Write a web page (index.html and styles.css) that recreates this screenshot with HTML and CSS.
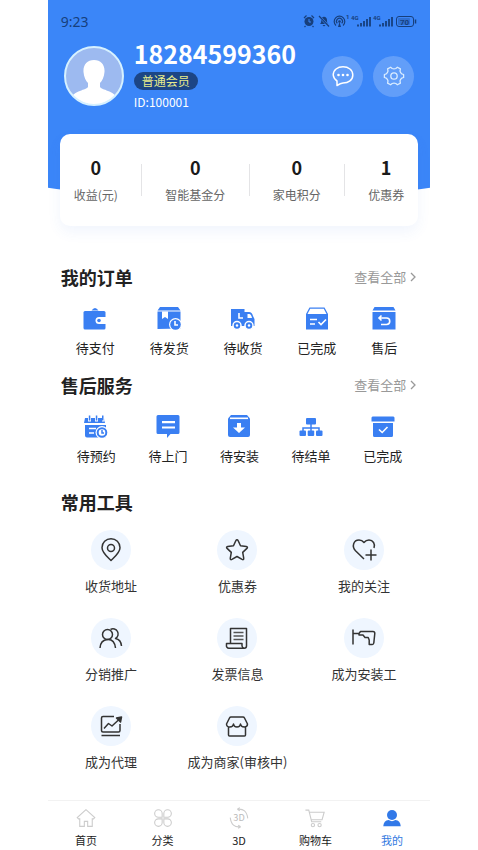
FILE: index.html
```html
<!DOCTYPE html>
<html lang="zh-CN">
<head>
<meta charset="utf-8">
<meta name="viewport" content="width=device-width, initial-scale=1">
<title>我的</title>
<link rel="stylesheet" href="styles.css">
</head>
<body>
<div class="app">
  <header class="hero">
    <div class="status">
      <span class="time">9:23</span>
      <svg class="status-icons" width="114" height="14" viewBox="0 0 114 14" aria-hidden="true">
        <circle cx="6" cy="7.500" r="4.500" fill="currentColor"/>
        <path d="M1 4l2.500-2.500M11 4L8.500 1.500M2.500 12l-1 1M9.500 12l1 1" stroke="currentColor" stroke-width="1.200"/>
        <path d="M6 5v3h2" stroke="#3b86f8" fill="none"/>
        <path d="M17 10c1-1 1.200-2 1.200-4 0-2 1-3 2.800-3.300 1.800.3 3 1.300 3 3.300 0 2 .2 3 1.200 4zM19.500 11h3l-1.500 1.500z" fill="currentColor"/>
        <path d="M16.500 2.500l9.500 10" stroke="#3b86f8" stroke-width="2.400"/>
        <path d="M16 2l10 10.500" stroke="currentColor" stroke-width="1.200"/>
        <path d="M33 11.500a5.300 5.300 0 1 1 7 0M34.300 9.300a3 3 0 1 1 4.400 0" stroke="currentColor" stroke-width="1.200" fill="none"/>
        <circle cx="36.500" cy="7.500" r="1.300" fill="currentColor"/>
        <path d="M36.500 8l-1.500 5h3z" fill="currentColor"/>
        <text x="43" y="5" font-size="6">1</text>
        <text x="48" y="6" font-size="6">4G</text>
        <path d="M55 12.500v-2M58 12.500V9M61 12.500V7M64 12.500V5M67 12.500V3" stroke="currentColor" stroke-width="1.800"/>
        <text x="70" y="6" font-size="6">4G</text>
        <path d="M77 12.500v-2M80 12.500V9M83 12.500V7M86 12.500V5M89 12.500V3" stroke="currentColor" stroke-width="1.800"/>
        <rect x="93.500" y="2.500" width="17" height="10" rx="2.500" stroke="currentColor" fill="none"/>
        <rect x="95" y="4" width="12" height="7" rx="1" fill="currentColor" opacity=".3"/>
        <path d="M112.500 5.500v4" stroke="currentColor" stroke-width="1.500"/>
        <text x="97" y="10.500" font-size="8">70</text>
      </svg>
    </div>
    <div class="profile">
      <svg class="avatar" viewBox="0 0 60 60" role="img" aria-label="头像">
        <defs><clipPath id="face"><circle cx="30" cy="30" r="28.500"/></clipPath></defs>
        <circle cx="30" cy="30" r="29" fill="#9dbaf0"/>
        <g clip-path="url(#face)" fill="#fff">
          <path d="M30 14c7 0 11 5 10.500 12-.3 5-2.500 9-4.500 11v4c1.500 3 14 3.500 18 12v9H6v-9c4-8.500 16.500-9 18-12v-4c-2-2-4.200-6-4.500-11C19 19 23 14 30 14z"/>
        </g>
        <circle cx="30" cy="30" r="29" fill="none" stroke="#d6f1ff" stroke-width="2"/>
      </svg>
      <div class="who">
        <h1 class="phone">18284599360</h1>
        <span class="badge">普通会员</span>
        <span class="uid">ID:100001</span>
      </div>
      <div class="actions">
        <button class="round" type="button" aria-label="消息">
          <svg width="24" height="24" viewBox="0 0 24 24" fill="none" stroke="#fff" stroke-width="1.500" stroke-linejoin="round"><path d="M6 21.500v-4.500A8.600 8.600 0 0 1 2.200 11C2.200 6 6.500 2.800 12 2.800S21.800 6 21.800 11 17.500 19 12 19q-2.500.2-6 2.500z"/><g fill="#fff" stroke="none"><circle cx="7.500" cy="11" r="1.300"/><circle cx="12" cy="11" r="1.300"/><circle cx="16.500" cy="11" r="1.300"/></g></svg>
        </button>
        <button class="round" type="button" aria-label="设置">
          <svg width="24" height="24" viewBox="0 0 24 24" fill="none" stroke="#d9ecff" stroke-width="1.300" stroke-linejoin="round"><path d="M8.600 3.200l1.600 1.300q1.800.7 3.600 0l1.600-1.300 3 1.700-.4 2.200q.4 1.700 1.700 2.700l1.900.7v3l-1.900.7q-1.300 1-1.700 2.700l.4 2.200-3 1.700-1.600-1.300q-1.800-.7-3.600 0l-1.600 1.300-3-1.700.4-2.200q-.4-1.700-1.700-2.700l-1.900-.7v-3l1.900-.7q1.300-1 1.700-2.700l-.4-2.200z"/><circle cx="12" cy="12" r="3.200"/></svg>
        </button>
      </div>
    </div>
  </header>

  <main>
    <section class="stats" aria-label="资产">
      <a class="stat" href="#"><strong>0</strong><span>收益(元)</span></a>
      <i class="rule"></i>
      <a class="stat" href="#"><strong>0</strong><span>智能基金分</span></a>
      <i class="rule"></i>
      <a class="stat" href="#"><strong>0</strong><span>家电积分</span></a>
      <i class="rule"></i>
      <a class="stat" href="#"><strong>1</strong><span>优惠券</span></a>
    </section>

    <section class="block">
      <div class="head">
        <h2>我的订单</h2>
        <a class="more" href="#">查看全部<svg width="6" height="10" viewBox="0 0 6 10"><path d="M1 1l4 4-4 4" fill="none" stroke="currentColor" stroke-width="1.300"/></svg></a>
      </div>
      <div class="row">
        <a class="item" href="#"><svg viewBox="0 0 24 24"><path d="M8.500 3.500Q12-1.500 15.500 3.500z"/><rect x=".5" y="4" width="22" height="18.500" rx="1.500"/><path d="M24 10h-8a3.500 3.500 0 0 0 0 7h8z" fill="#fff"/><circle cx="16" cy="13.500" r="1.800"/></svg>待支付</a>
        <a class="item" href="#"><svg viewBox="0 0 24 24"><path d="M3 0h18l2.500 3.500H.5zM.5 4.500h23v17h-1L.5 22z"/><path d="M5 4.500h6V12l-3-2-3 2z" fill="#fff"/><circle cx="18.500" cy="17.500" r="6.500" fill="#fff"/><circle cx="18.500" cy="17.500" r="5.300"/><path d="M18 14v4h3" class="cut"/></svg>待发货</a>
        <a class="item" href="#"><svg viewBox="0 0 24 24"><path d="M0 2h13.500v17H0zM13 5h5q3 0 4 4l1.500 3v7H13z"/><path d="M16.500 7h1.700q2 0 2.800 4h-4.500z" fill="#fff"/><path d="M8 6v5h4" class="cut"/><g stroke="#fff" stroke-width="1.500"><circle cx="6" cy="18.500" r="4"/><circle cx="18" cy="18.500" r="4"/></g><g fill="#fff"><circle cx="6" cy="18.500" r="1.200"/><circle cx="18" cy="18.500" r="1.200"/></g></svg>待收货</a>
        <a class="item" href="#"><svg viewBox="0 0 24 24"><path d="M4.500.5h15L23 7v15.500H1V7z"/><path d="M5.200 1.800h13.600l2.700 5.200h-19z" fill="#fff"/><path d="M5 12.500h7M5 17h5M13.500 15l2.500 2.500 5-5" class="cut"/></svg>已完成</a>
        <a class="item" href="#"><svg viewBox="0 0 24 24"><path d="M2.500 0h19l2 3.500H.5zM.5 5h23v17.500H.5z"/><path d="M7 11h7.500a3 3 0 0 1 0 6.500H9M9.500 8.500L7 11l2.500 2.500" class="cut"/></svg>售后</a>
      </div>
    </section>

    <section class="block service">
      <div class="head">
        <h2>售后服务</h2>
        <a class="more" href="#">查看全部<svg width="6" height="10" viewBox="0 0 6 10"><path d="M1 1l4 4-4 4" fill="none" stroke="currentColor" stroke-width="1.300"/></svg></a>
      </div>
      <div class="row">
        <a class="item" href="#"><svg viewBox="0 0 24 24"><path d="M1 3h3v3.500h3V3h4v3.500h3V3h4v3.500h3L20 3l1 5H0zM4.800.5h1.500v5H4.800zM11.800.5h1.500v5h-1.500zM18 .5h1.500v5H18zM1 10h21v12.500H3a2 2 0 0 1-2-2z"/><path d="M5 13.500h7M5 18h5" class="cut"/><circle cx="18" cy="17.500" r="6.500" fill="#fff"/><circle cx="18" cy="17.500" r="4.300" fill="none" stroke="currentColor" stroke-width="2"/><path d="M18 15v3h2" fill="none" stroke="currentColor" stroke-width="1.500"/></svg>待预约</a>
        <a class="item" href="#"><svg viewBox="0 0 24 24"><path d="M2 0h20a1.500 1.500 0 0 1 1.500 1.500v16A1.500 1.500 0 0 1 22 19h-7.500L11 23v-4H2a1.500 1.500 0 0 1-1.500-1.500v-16A1.500 1.500 0 0 1 2 0z"/><path d="M6 7.200h13M6 12.500h13" class="cut wide"/></svg>待上门</a>
        <a class="item" href="#"><svg viewBox="0 0 24 24"><path d="M4 0h16l3 3.500V20a2 2 0 0 1-2 2H3a2 2 0 0 1-2-2V3.500z"/><path d="M3 3.300h18" class="cut"/><path d="M10 8h4v4.500h4L12 18l-6-5.500h4z" fill="#fff"/></svg>待安装</a>
        <a class="item" href="#"><svg viewBox="0 0 24 24"><rect x="7" y="3" width="10" height="6.500" rx="1"/><path d="M12 9v8M4 17v-4h16v4" fill="none" stroke="currentColor" stroke-width="1.500"/><rect x=".5" y="15.500" width="6.500" height="5.500" rx="1"/><rect x="8.700" y="15.500" width="6.500" height="5.500" rx="1"/><rect x="17" y="15.500" width="6.500" height="5.500" rx="1"/></svg>待结单</a>
        <a class="item" href="#"><svg viewBox="0 0 24 24"><path d="M1.500 1.500h21l1 1v4H.5v-4zM2 8h20v12.500a1.500 1.500 0 0 1-1.500 1.500h-17A1.500 1.500 0 0 1 2 20.500z"/><path d="M8 14.500l3.200 3 5.300-5.500" class="cut"/></svg>已完成</a>
      </div>
    </section>

    <section class="block tools">
      <div class="head"><h2>常用工具</h2></div>
      <div class="grid">
        <a class="tool" href="#"><span class="disc"><svg viewBox="0 0 24 24"><path d="M12 22.500C8 18.500 3 14.500 3 9.700a9 9 0 0 1 18 0c0 4.800-5 8.800-9 12.800z"/><circle cx="12" cy="10" r="3.500"/></svg></span>收货地址</a>
        <a class="tool" href="#"><span class="disc"><svg viewBox="0 0 24 24"><path d="M12 1.800q.7 0 1.200 1l2.300 5 5.800.7q1.900.4.600 1.900l-4.200 4 1 5.800q.2 2-1.600 1.200L12 18.500l-5.100 2.900q-1.800.8-1.600-1.200l1-5.800-4.200-4q-1.300-1.500.6-1.900l5.800-.7 2.300-5q.5-1 1.200-1z"/></svg></span>优惠券</a>
        <a class="tool" href="#"><span class="disc"><svg viewBox="0 0 24 24"><path d="M12 21L3.500 12.800C-.5 8.500 1.500 2 7 2q3 0 5 2.500Q14 2 17 2c4 0 6.500 4 5 8M19 11.500v11M13.500 17h11"/></svg></span>我的关注</a>
        <a class="tool" href="#"><span class="disc"><svg viewBox="0 0 24 24"><circle cx="8.500" cy="8.500" r="5"/><path d="M1 22q.5-8 7.500-8.500T16.500 22M11.500 3.500a5 5 0 1 1 5 9q5.500 1 6 7.500"/></svg></span>分销推广</a>
        <a class="tool" href="#"><span class="disc"><svg viewBox="0 0 24 24"><path d="M5.500 17V2.500h16V20a2.200 2.200 0 0 1-2.200 2.200H4A2.500 2.500 0 0 1 1.500 19v-1.500H17V20q.3 2 2.300 2.200"/><path d="M8.500 6.500h10M8.500 10h10M8.500 13.500h10" stroke="#555"/></svg></span>发票信息</a>
        <a class="tool" href="#"><span class="disc"><svg viewBox="0 0 24 24"><path d="M1 3.500v15M1 7.500h6l1.500-2H21q1.800 0 1.800 2L21.800 17q-.2 1.500-1.500 1.500h-3.100V14l-1-2.500H13L11 9H7V7"/></svg></span>成为安装工</a>
        <a class="tool" href="#"><span class="disc"><svg viewBox="0 0 24 24"><path d="M15 2.500H4A1.500 1.500 0 0 0 2.500 4v12.500A1.500 1.500 0 0 0 4 18h15.500a1.500 1.500 0 0 0 1.500-1.500V10M2.500 21.500H21M5 14.500l4.500-5 3.500 2.500 7-6.500"/><path d="M17.500 4l5-1-1 5z" fill="currentColor"/></svg></span>成为代理</a>
        <a class="tool" href="#"><span class="disc"><svg viewBox="0 0 24 24"><path d="M6 3h12q1 0 1.500 1l3 6q0 3-3.300 3t-3.700-3q-.3 3-3.500 3t-3.500-3q-.4 3-3.700 3t-3.300-3l3-6Q5 3 6 3zM3.500 13v8q0 1 1 1h15q1 0 1-1v-8"/></svg></span>成为商家(审核中)</a>
      </div>
    </section>
  </main>

  <nav class="tabs">
    <a class="tab" href="#"><svg viewBox="0 0 24 24"><path d="M12 2L1.500 11.500 3 13h1.500v9H10v-6h4v6h5.500v-9H21l1.500-1.500z"/></svg>首页</a>
    <a class="tab" href="#"><svg viewBox="0 0 24 24"><path d="M11 11H6.500A4.500 4.500 0 1 1 11 6.500zM13 11V6.500a4.500 4.500 0 1 1 4.500 4.500zM11 13v4.500A4.500 4.500 0 1 1 6.500 13zM13 13h4.500a4.500 4.500 0 1 1-4.500 4.500z"/></svg>分类</a>
    <a class="tab" href="#"><svg viewBox="0 0 24 24"><path d="M10 1.500q11-1.500 12.500 11M10 1.500l3-2M10 1.500l3 2M14 22.500Q3 24 1.500 11.500M14 22.500l-3-2M14 22.500l-3 2"/><text x="12" y="16" text-anchor="middle">3D</text></svg>3D</a>
    <a class="tab" href="#"><svg viewBox="0 0 24 24"><path d="M.5 2.500h4L8 16.500h11.500M5 5h18l-2.500 9H7.500"/><circle cx="9.500" cy="20.500" r="2"/><circle cx="17.500" cy="20.500" r="2"/></svg>购物车</a>
    <a class="tab active" href="#" aria-current="page"><svg viewBox="0 0 24 24"><circle cx="12" cy="8.500" r="6"/><path d="M1.500 22q.5-7 6.500-7.500 4 2.500 8 0 6 .5 6.500 7.500z"/></svg>我的</a>
  </nav>
</div>
</body>
</html>
```
FILE: styles.css
```css
* {
  box-sizing: border-box;
}

body {
  margin: 0;
  background: #fff;
  color: #222;
  font-family: "Noto Sans CJK SC", "Noto Sans", sans-serif;
}

a {
  color: inherit;
  text-decoration: none;
}

h1,
h2 {
  margin: 0;
}

svg {
  display: block;
  overflow: visible;
}

.app {
  position: relative;
  display: flex;
  flex-direction: column;
  width: 80%;
  min-height: 100vh;
  margin: 0 auto;
}

.app::before {
  content: "";
  position: absolute;
  inset: 0 0 auto;
  height: 204px;
  background: #3b86f8;
  clip-path: ellipse(140% 201px at 50% 0);
}

.hero {
  position: relative;
  padding: 12px 16px 24px;
  color: #fff;
}

/* status bar */
.status {
  display: flex;
  align-items: center;
  justify-content: space-between;
  height: 18px;
  margin: 0 -3px;
  color: #173f7c;
}

.time {
  font: 14px "Noto Sans", sans-serif;
}

.status-icons text {
  fill: currentColor;
  font-family: Roboto, sans-serif;
  font-weight: 700;
}

/* profile */
.profile {
  display: flex;
  align-items: center;
  gap: 10px;
  margin-top: 12px;
}

.avatar {
  width: 60px;
  height: 60px;
}

.who {
  display: flex;
  flex: 1;
  flex-direction: column;
  align-items: flex-start;
}

.phone {
  font-size: 25px;
  line-height: 22px;
}

.badge {
  margin-top: 8px;
  padding: 0 8px;
  border-radius: 9px;
  background: #1c4585;
  color: #e8ec8c;
  font-size: 12px;
  line-height: 18px;
}

.uid {
  margin-top: 4px;
  font-size: 12px;
  line-height: 16px;
}

.actions {
  display: flex;
  gap: 10px;
}

.round {
  display: grid;
  place-items: center;
  width: 41px;
  height: 41px;
  padding: 0;
  border: 0;
  border-radius: 50%;
  background: rgba(255, 255, 255, .2);
}

/* stats card */
.stats {
  position: relative;
  display: flex;
  align-items: center;
  justify-content: space-between;
  height: 92px;
  margin: 0 12px;
  padding: 0 14px;
  border-radius: 10px;
  background: #fff;
  box-shadow: 0 6px 14px rgba(60, 110, 230, .07);
}

.stat {
  display: flex;
  flex-direction: column;
  align-items: center;
  gap: 6px;
  color: #666;
  font-size: 12px;
  line-height: 20px;
}

.stat strong {
  color: #1a1a1a;
  font-size: 18px;
  line-height: 24px;
}

.rule {
  width: 1px;
  height: 32px;
  background: #e4e4e6;
}

/* sections */
.block {
  margin-top: 14px;
}

.stats + .block {
  margin-top: 38px;
}

.tools {
  margin-top: 23px;
}

.head {
  display: flex;
  align-items: center;
  justify-content: space-between;
  padding: 0 14px 0 13px;
}

h2 {
  font-size: 18px;
  line-height: 26px;
}

.more {
  display: flex;
  align-items: center;
  gap: 4px;
  color: #999;
  font-size: 13px;
  line-height: 24px;
}

.row {
  display: flex;
  justify-content: space-between;
  margin-top: 17px;
  padding: 0 33px 0 28px;
}

.service .row {
  padding: 0 28px 0 29px;
}

.item {
  display: flex;
  flex-direction: column;
  align-items: center;
  gap: 7px;
  font-size: 13px;
  line-height: 20px;
}

.item svg {
  width: 24px;
  height: 24px;
  fill: currentColor;
  color: #3a7ff2;
}

.item .cut {
  fill: none;
  stroke: #fff;
  stroke-width: 1.6;
}

.item .wide {
  stroke-width: 2.2;
}

.grid {
  display: grid;
  grid-template-columns: repeat(3, 1fr);
  row-gap: 21px;
  margin-top: 15px;
  padding-right: 3px;
}

.tool {
  display: flex;
  flex-direction: column;
  align-items: center;
  gap: 5px;
  color: #333;
  font-size: 13px;
  line-height: 22px;
  white-space: nowrap;
}

.disc {
  display: grid;
  place-items: center;
  width: 40px;
  height: 40px;
  border-radius: 50%;
  background: #eff6ff;
}

.disc svg {
  width: 24px;
  height: 24px;
  fill: none;
  stroke: currentColor;
  stroke-width: 1.5;
  stroke-linejoin: round;
}

/* bottom navigation */
.tabs {
  display: flex;
  height: 50px;
  margin-top: auto;
  border-top: 1px solid #f2f2f2;
}

.tab {
  display: flex;
  flex: 1;
  flex-direction: column;
  align-items: center;
  gap: 4px;
  padding-top: 7px;
  font-size: 11px;
  line-height: 16px;
}

.tab svg {
  width: 20px;
  height: 20px;
  fill: none;
  stroke: #ccc;
  stroke-width: 1.3;
}

.tab text {
  fill: #bbb;
  stroke: none;
  font-size: 11px;
}

.tab.active {
  color: #3279e0;
}

.tab.active svg {
  fill: #3279e8;
  stroke: none;
}
```
